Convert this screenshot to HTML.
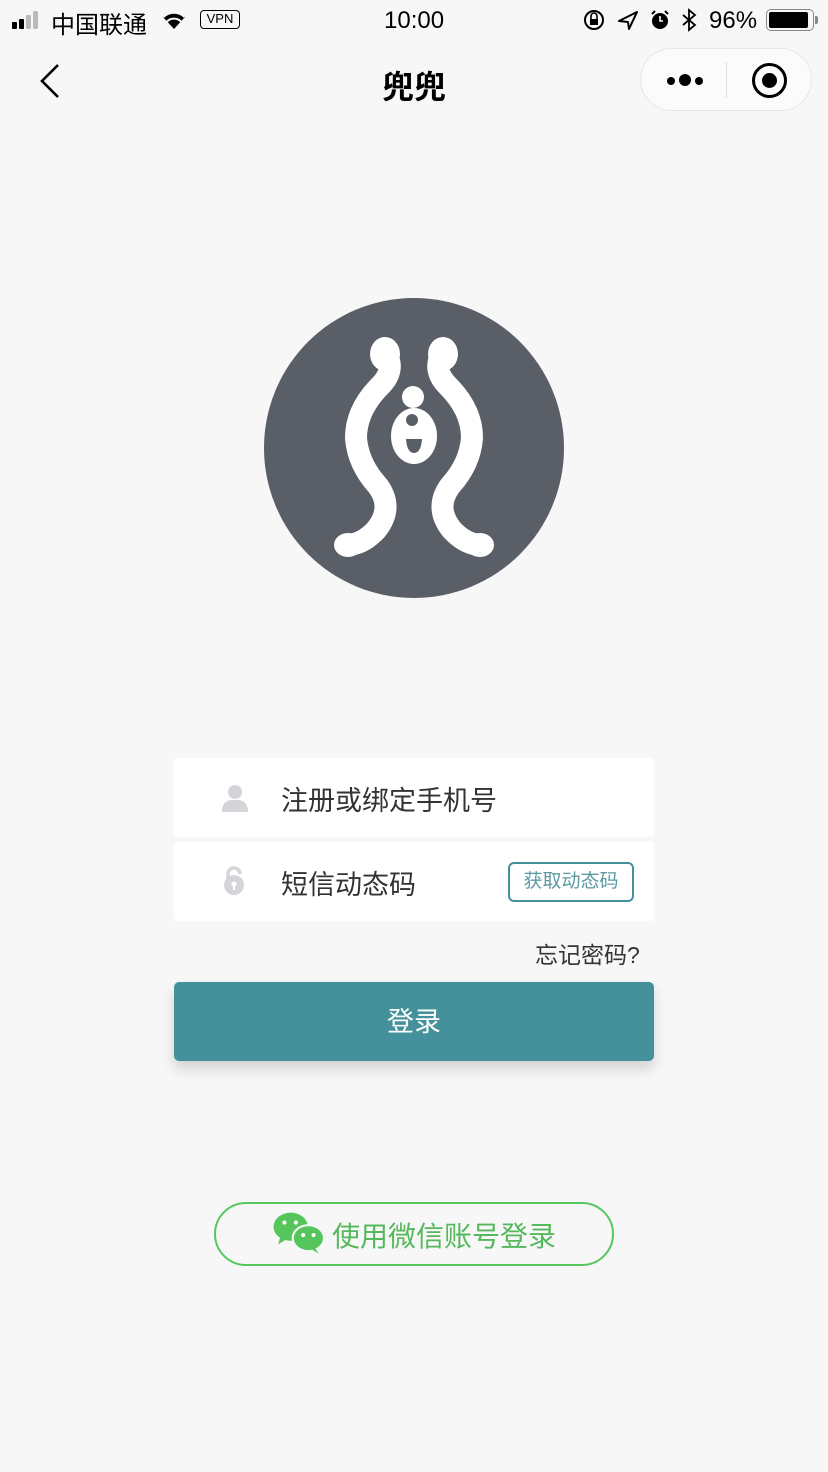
<!DOCTYPE html>
<html><head><meta charset="utf-8"><style>
*{margin:0;padding:0;box-sizing:border-box}
body{width:828px;height:1472px;background:#f7f7f7;font-family:"Liberation Sans","Noto Sans CJK SC",sans-serif;position:relative;overflow:hidden;color:#222}
.a{position:absolute}
</style></head><body>
<!-- status bar -->
<div class="a" style="left:12px;top:10px;width:36px;height:20px">
<div class="a" style="left:0;top:12px;width:5px;height:7px;background:#000;border-radius:1px"></div>
<div class="a" style="left:7px;top:9px;width:5px;height:10px;background:#000;border-radius:1px"></div>
<div class="a" style="left:14px;top:5px;width:5px;height:14px;background:#bbb;border-radius:1px"></div>
<div class="a" style="left:21px;top:1px;width:5px;height:18px;background:#bbb;border-radius:1px"></div>
</div>
<div class="a" style="left:51px;top:5px;font-size:24px;color:#000">中国联通</div>
<svg class="a" style="left:160px;top:9px" width="28" height="22" viewBox="0 0 28 22"><path d="M14 20 L3 8 A16 16 0 0 1 25 8 Z" fill="#000"/><path d="M7 12.5 A10 10 0 0 1 21 12.5" stroke="#f7f7f7" stroke-width="2" fill="none"/><path d="M3.5 8 A15 15 0 0 1 24.5 8" stroke="#f7f7f7" stroke-width="2" fill="none"/></svg>
<div class="a" style="left:200px;top:10px;width:40px;height:19px;border:1.5px solid #000;border-radius:4px;font-size:13px;line-height:16px;text-align:center;color:#000">VPN</div>
<div class="a" style="left:384px;top:7px;font-size:24px;color:#000">10:00</div>
<svg class="a" style="left:583px;top:8px" width="130" height="24" viewBox="0 0 130 24">
<circle cx="11" cy="12" r="9" stroke="#000" stroke-width="2" fill="none"/><rect x="7" y="11" width="8" height="6" fill="#000"/><path d="M8 11 V8 A3 3 0 0 1 14 8 V11" stroke="#000" stroke-width="1.6" fill="none"/>
<path d="M36 13 L54 4 L46 21 L45 14 Z" fill="none" stroke="#000" stroke-width="2" stroke-linejoin="round"/>
<circle cx="77" cy="13" r="8" fill="#000"/><path d="M77 8 V13 H80" stroke="#fff" stroke-width="1.6" fill="none"/><path d="M69 6 L72 3 M85 6 L82 3" stroke="#000" stroke-width="2"/>
<path d="M100 7 L112 17 L106 22 V2 L112 7 L100 17" stroke="#000" stroke-width="1.8" fill="none"/>
</svg>
<div class="a" style="left:709px;top:7px;font-size:24px;color:#000">96%</div>
<div class="a" style="left:766px;top:9px;width:48px;height:22px;border:1.5px solid #888;border-radius:5px;padding:2px"><div style="width:39px;height:100%;background:#000;border-radius:2px"></div></div>
<div class="a" style="left:815px;top:16px;width:3px;height:8px;background:#888;border-radius:0 2px 2px 0"></div>
<!-- nav -->
<svg class="a" style="left:36px;top:62px" width="30" height="38" viewBox="0 0 30 38"><path d="M22 3 L6 19 L22 35" stroke="#000" stroke-width="2.6" fill="none"/></svg>
<div class="a" style="left:0;width:828px;top:62px;text-align:center;font-size:32px;font-weight:bold;color:#000">兜兜</div>
<div class="a" style="left:640px;top:48px;width:172px;height:63px;border:1px solid #e6e6e6;border-radius:32px;background:#fbfbfb"></div>
<div class="a" style="left:667px;top:77px;width:8px;height:8px;border-radius:50%;background:#000"></div>
<div class="a" style="left:679px;top:74px;width:12px;height:12px;border-radius:50%;background:#000"></div>
<div class="a" style="left:695px;top:77px;width:8px;height:8px;border-radius:50%;background:#000"></div>
<div class="a" style="left:726px;top:62px;width:1px;height:36px;background:#ddd"></div>
<div class="a" style="left:752px;top:63px;width:35px;height:35px;border-radius:50%;border:3.5px solid #000"></div>
<div class="a" style="left:762px;top:73px;width:15px;height:15px;border-radius:50%;background:#000"></div>
<!-- logo -->
<svg class="a" style="left:264px;top:298px" width="300" height="300" viewBox="0 0 300 300">
<circle cx="150" cy="150" r="150" fill="#595e67"/>
<g fill="none" stroke="#fff" stroke-linecap="round" stroke-width="22">
<path d="M124 60 Q130 74 116 88 Q92 112 92 140 Q94 166 114 188 Q130 210 112 232 Q98 247 82 247"/>
<path d="M176 60 Q170 74 184 88 Q208 112 208 140 Q206 166 186 188 Q170 210 188 232 Q202 247 218 247"/>
</g>
<ellipse cx="121" cy="56" rx="15" ry="17" fill="#fff"/><ellipse cx="179" cy="56" rx="15" ry="17" fill="#fff"/>
<ellipse cx="84" cy="247" rx="14" ry="12" fill="#fff"/><ellipse cx="216" cy="247" rx="14" ry="12" fill="#fff"/>
<circle cx="149" cy="99" r="11" fill="#fff"/>
<ellipse cx="150" cy="138" rx="23" ry="28" fill="#fff"/>
<circle cx="148" cy="122" r="6" fill="#595e67"/>
<path d="M142 141 H158 Q157 155 150 155 Q143 155 142 141 Z" fill="#595e67"/>
</svg>
<!-- inputs -->
<div class="a" style="left:174px;top:758px;width:480px;height:79px;background:#fff;border-radius:3px"></div>
<div class="a" style="left:174px;top:842px;width:480px;height:79px;background:#fff;border-radius:3px"></div>
<svg class="a" style="left:220px;top:783px" width="30" height="30" viewBox="0 0 30 30"><circle cx="15" cy="9" r="7" fill="#d4d5d8"/><path d="M2 29 Q2 18 11 17 H19 Q28 18 28 29 Z" fill="#d4d5d8"/></svg>
<div class="a" style="left:281px;top:779px;font-size:27px;color:#333">注册或绑定手机号</div>
<svg class="a" style="left:222px;top:866px" width="26" height="30" viewBox="0 0 26 30"><circle cx="12" cy="19" r="10" fill="#d4d5d8"/><path d="M6 15 V8 A6 6 0 0 1 18 8" stroke="#d4d5d8" stroke-width="3.5" fill="none"/><circle cx="12" cy="18" r="2.5" fill="#fff"/><rect x="11" y="19" width="2" height="5" fill="#fff"/></svg>
<div class="a" style="left:281px;top:863px;font-size:27px;color:#333">短信动态码</div>
<div class="a" style="left:508px;top:862px;width:126px;height:40px;border:2px solid #44919b;border-radius:6px;font-size:19px;color:#5a9aa2;text-align:center;line-height:36px">获取动态码</div>
<div class="a" style="left:535px;top:936px;font-size:23px;color:#333">忘记密码?</div>
<div class="a" style="left:174px;top:982px;width:480px;height:79px;background:#44919b;border-radius:5px;box-shadow:0 8px 14px rgba(0,0,0,0.15);color:#fff;font-size:27px;text-align:center;line-height:80px">登录</div>
<!-- wechat -->
<div class="a" style="left:214px;top:1202px;width:400px;height:64px;border:2.5px solid #56c75e;border-radius:32px"></div>
<svg class="a" style="left:273px;top:1212px" width="52" height="44" viewBox="0 0 50 42"><ellipse cx="17" cy="14" rx="16.5" ry="13.5" fill="#55c65c"/><path d="M7 24 L5 31 L13 26 Z" fill="#55c65c"/><ellipse cx="34" cy="25" rx="15" ry="12.5" fill="#55c65c" stroke="#f7f7f7" stroke-width="2"/><path d="M40 34 L44 40 L36 35 Z" fill="#55c65c"/><circle cx="11" cy="10" r="2" fill="#fff"/><circle cx="22" cy="10" r="2" fill="#fff"/><circle cx="29" cy="22" r="2" fill="#fff"/><circle cx="39" cy="22" r="2" fill="#fff"/></svg>
<div class="a" style="left:332px;top:1215px;font-size:28px;color:#55b95c">使用微信账号登录</div>
</body></html>
